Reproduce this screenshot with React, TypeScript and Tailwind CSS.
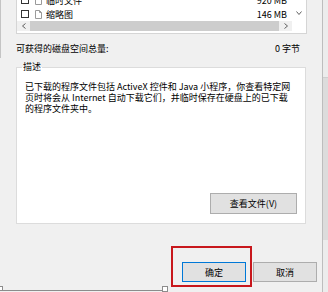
import React from "react";

const FileIcon = () => (
  <svg width="7" height="9" viewBox="0 0 7 9" className="shrink-0">
    <path d="M0.5 0.5H4.5L6.5 2.5V8.5H0.5Z" fill="#fff" stroke="#9a9a9a" strokeWidth="1" />
    <path d="M4.5 0.5V2.5H6.5" fill="none" stroke="#9a9a9a" strokeWidth="1" />
  </svg>
);

const Chevron = ({ dir }: { dir: "left" | "right" | "down" }) => {
  const d =
    dir === "left" ? "M3.5 0.5L0.5 3L3.5 5.5" : dir === "right" ? "M0.5 0.5L3.5 3L0.5 5.5" : "M0.5 0.5L3 3.5L5.5 0.5";
  const w = dir === "down" ? 6 : 4;
  const h = dir === "down" ? 4 : 6;
  return (
    <svg width={w} height={h} viewBox={`0 0 ${w} ${h}`}>
      <path d={d} fill="none" stroke="#606060" strokeWidth="1" />
    </svg>
  );
};

const rows = [
  { name: "临时文件", size: "920 MB" },
  { name: "缩略图", size: "146 MB" },
];

const App = () => {
  return (
    <div className="w-[328px] h-[292px] overflow-hidden bg-[#f0f0f0] flex text-[9px] text-black font-['Noto_Sans_CJK_SC','Noto_Sans',sans-serif]">
      <div className="relative w-[322px] h-full flex flex-col pl-[16px]">
        {/* list box */}
        <div className="mt-[-8px] w-[291px] h-[42px] border border-[#d5d5d5] bg-white flex shrink-0">
          <div className="w-[275px] flex flex-col">
            {rows.map((r) => (
              <div key={r.name} className="h-[14px] flex items-center pl-[4px] pr-[5px]">
                <div className="w-[8px] h-[8px] border border-[#333] bg-white shrink-0" />
                <div className="ml-[6px]">
                  <FileIcon />
                </div>
                <span className="ml-[4px] leading-none">{r.name}</span>
                <span className="ml-auto leading-none">{r.size}</span>
              </div>
            ))}
            <div className="h-[10px] flex items-center bg-[#f0f0f0]">
              <div className="w-[13px] flex justify-center">
                <Chevron dir="left" />
              </div>
              <div className="w-[249px] h-full bg-[#cdcdcd]" />
              <div className="flex-1 flex justify-center">
                <Chevron dir="right" />
              </div>
            </div>
          </div>
          <div className="w-[14px] flex flex-col items-center pt-[18px]">
            <Chevron dir="down" />
          </div>
        </div>

        {/* total */}
        <div className="mt-[7px] h-[14px] w-[284px] flex items-center justify-between leading-none">
          <span>可获得的磁盘空间总量:</span>
          <span>0 字节</span>
        </div>

        {/* description group */}
        <div className="relative mt-[12px] w-[290px] h-[157px] border border-[#dcdcdc] bg-white flex flex-col shrink-0">
          <span className="absolute left-[5px] top-[-7px] px-[1px] leading-[12px] bg-[linear-gradient(#f0f0f0_50%,#fff_50%)]">
            描述
          </span>
          <p className="pt-[13px] pl-[8px] leading-[11px] whitespace-nowrap">
            已下载的程序文件包括 ActiveX 控件和 Java 小程序，你查看特定网
            <br />
            页时将会从 Internet 自动下载它们，并临时保存在硬盘上的已下载
            <br />
            的程序文件夹中。
          </p>
          <div className="flex-1" />
          <button className="self-end mr-[8px] mb-[9px] w-[87px] h-[21px] border border-[#adadad] bg-[#e1e1e1] leading-none">
            查看文件(V)
          </button>
        </div>

        {/* dialog buttons */}
        <div className="mt-[38px] flex gap-[7px] pl-[166px]">
          <button className="w-[64px] h-[20px] border border-[#0078d7] bg-[#e1e1e1] leading-none">确定</button>
          <button className="w-[64px] h-[20px] border border-[#adadad] bg-[#e1e1e1] leading-none">取消</button>
        </div>

        {/* annotation overlay */}
        <div className="absolute left-[171px] top-[246px] w-[81px] h-[41px] border-2 border-[#c8171c]" />
        <div className="absolute left-0 top-[290px] w-[164px] h-[1px] bg-[#8c8c8c]" />
        <div className="absolute left-[-2px] top-[286px] w-[5px] h-[5px] border border-[#8c8c8c] bg-white" />
        <div className="absolute left-[162px] top-[286px] w-[6px] h-[6px] border border-[#8c8c8c] bg-white" />
        <div className="absolute left-0 top-0 w-[1px] h-[58px] bg-[#c4c4c4]" />
      </div>

      {/* outer window edge */}
      <div className="w-[1px] h-full bg-[#bdbdbd]" />
      <div className="flex-1 h-full flex flex-col bg-[#ececec]">
        <div className="h-[78px] border-b border-[#cfcfcf]" />
        <div className="h-[162px] bg-[#dcdcdc]" />
      </div>
    </div>
  );
};

export default App;
